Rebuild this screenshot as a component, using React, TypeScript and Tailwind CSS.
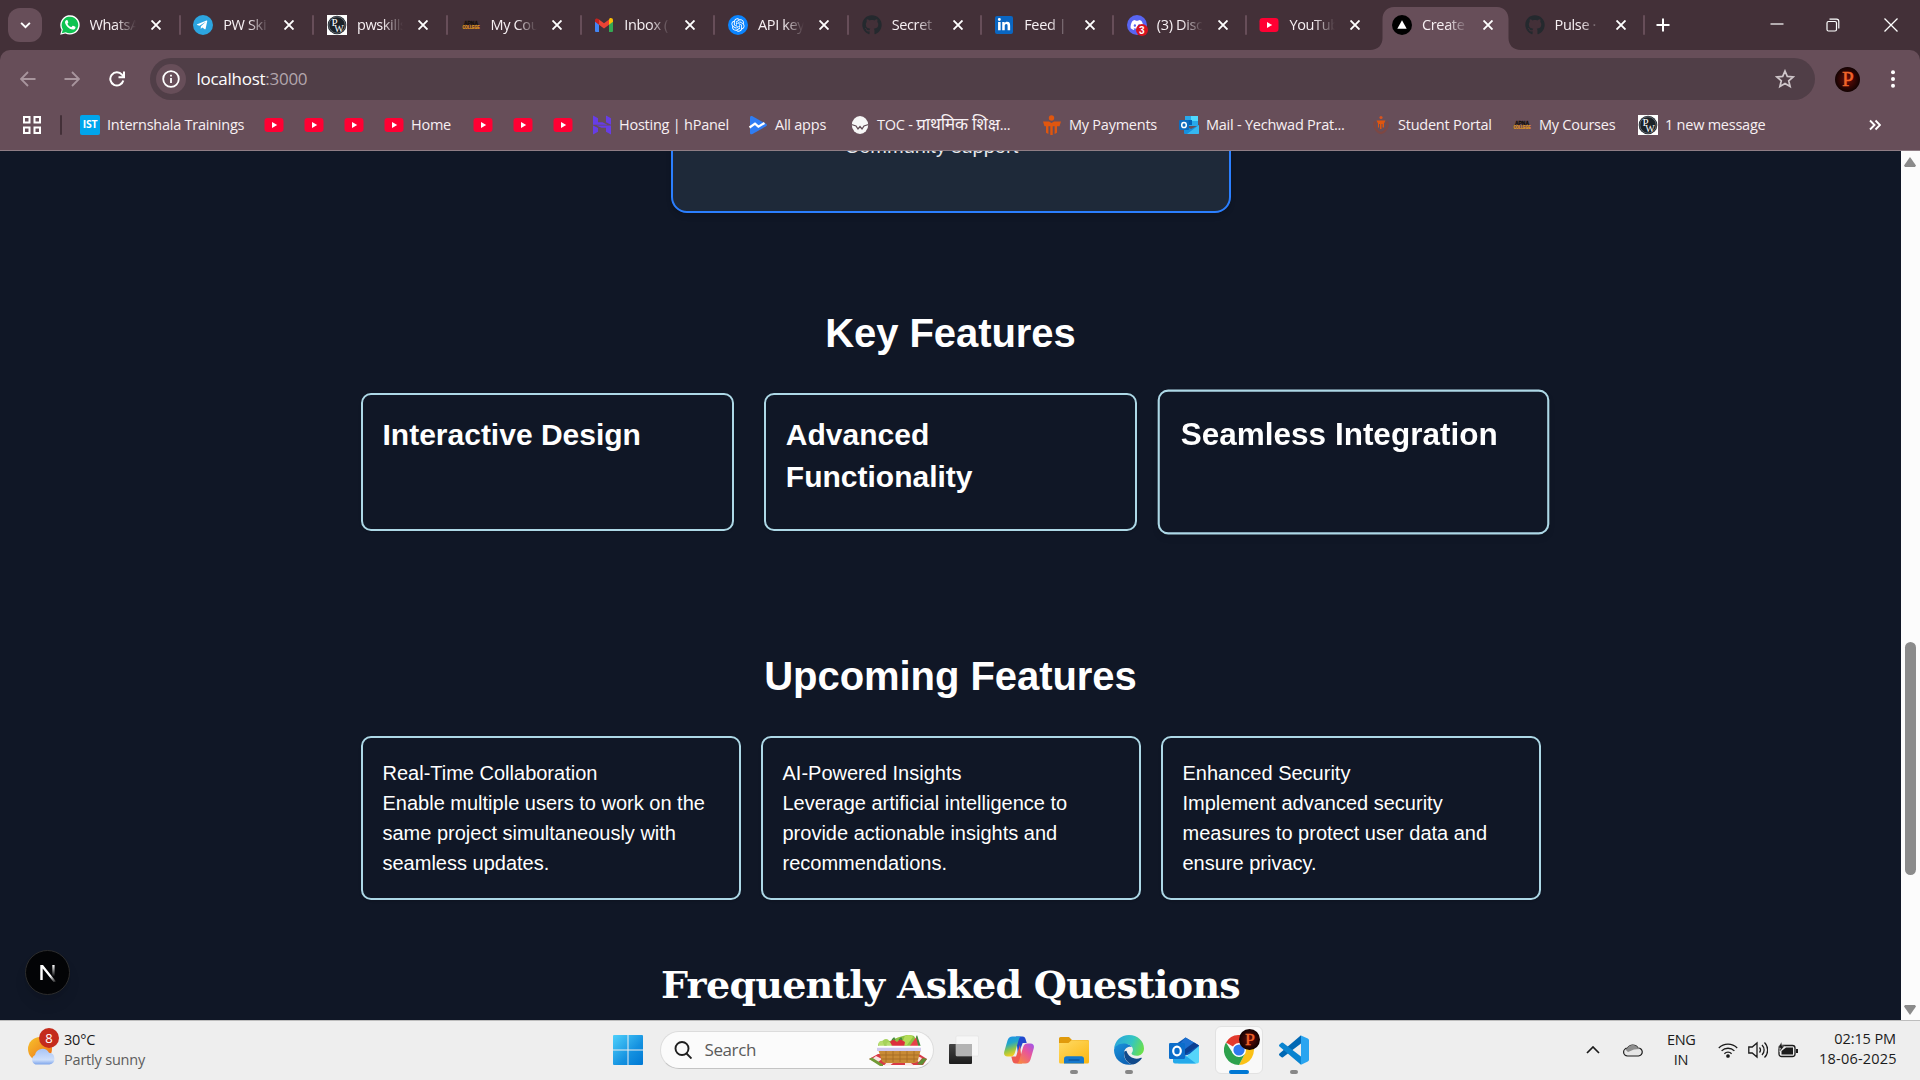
import type { ReactNode } from "react";
import { FaWhatsapp, FaTelegramPlane, FaGithub, FaLinkedinIn, FaDiscord } from "react-icons/fa";
import { RiOpenaiFill } from "react-icons/ri";

function YouTube() {
  return (
    <svg viewBox="0 0 20 20" className="size-5">
      <rect x="0.5" y="3" width="19" height="14" rx="3.2" fill="#ff0033" />
      <path d="M8 6.9v6.2l5.2-3.1z" fill="#fff" />
    </svg>
  );
}

function Github() {
  return <FaGithub className="size-5 text-[#24292e]" />;
}

function PwLogo() {
  return (
    <svg viewBox="0 0 20 20" className="size-5">
      <rect width="20" height="20" fill="#fff" />
      <circle cx="10" cy="10" r="9.3" fill="#1b2127" />
      <circle cx="10" cy="10" r="8.2" fill="none" stroke="#7d858c" strokeWidth="0.7" />
      <text x="4.6" y="11" fontFamily="Liberation Serif, serif" fontSize="11" fill="#fff">P</text>
      <text x="7.2" y="16.6" textLength="9.5" lengthAdjust="spacingAndGlyphs" fontFamily="Liberation Serif, serif" fontSize="11" fill="#fff">W</text>
    </svg>
  );
}

function CollegeLogo() {
  return (
    <svg viewBox="0 0 20 20" className="size-5">
      <text x="10" y="9.6" textAnchor="middle" fontFamily="Liberation Sans, sans-serif" fontWeight="900" fontSize="5" fill="#15100c" stroke="#15100c" strokeWidth="0.3">APNA</text>
      <text x="10" y="14" textAnchor="middle" textLength="17" lengthAdjust="spacingAndGlyphs" fontFamily="Liberation Sans, sans-serif" fontWeight="900" fontSize="5" fill="#e49a1c" stroke="#e49a1c" strokeWidth="0.2">COLLEGE</text>
    </svg>
  );
}

function WhatsApp() {
  return (
    <span className="relative flex size-5 items-center justify-center">
      <svg viewBox="0 0 20 20" className="size-5">
        <path d="M0.2 19.8 1.6 14.8A9.7 9.7 0 1 1 5.3 18.4z" fill="#fff" />
        <path d="M1.7 18.3 2.9 14.4A8.3 8.3 0 1 1 5.8 17.2z" fill="#0fc351" />
        <path d="M7.600 5.400c-.2-.5-.5-.5-.8-.5-.9 0-1.800 1-1.800 2.300 0 2.300 3.600 7.300 8 7.300 1.500 0 2.500-1 2.500-2.100 0-.4-.2-.6-.6-.8l-1.800-.9c-.3-.1-.5 0-.7.3l-.8 1c-.2.2-.4.2-.7.100-1.500-.7-2.600-1.700-3.400-3.200-.1-.2 0-.4.100-.5l.6-.7c.1-.2.1-.4 0-.600z" fill="#fff" />
      </svg>
    </span>
  );
}

function Telegram() {
  return (
    <span className="flex size-5 items-center justify-center rounded-full bg-[#2ca5e0]">
      <FaTelegramPlane className="mr-0.5 size-3 text-white" />
    </span>
  );
}

function Gmail() {
  return (
    <svg viewBox="0 0 20 20" className="size-5">
      <path d="M1 5.500V16a1 1 0 0 0 1 1h3V8.500z" fill="#4285f4" />
      <path d="M15 8.500V17h3a1 1 0 0 0 1-1V5.500z" fill="#34a853" />
      <path d="M15 4.500v5.300l4-3V5.200c0-1.900-2-2.900-3.500-1.800z" fill="#fbbc04" />
      <path d="M5 9.800V4.500l5 3.700 5-3.700v5.300l-5 3.700z" fill="#ea4335" />
      <path d="M1 5.200v1.600l4 3V4.500l-.5-.4C3 2.900 1 3.500 1 5.200z" fill="#c5221f" />
    </svg>
  );
}

function OpenAi() {
  return (
    <span className="flex size-5 items-center justify-center rounded-full bg-[#0a84ff]">
      <RiOpenaiFill className="size-4 text-white" />
    </span>
  );
}

function LinkedIn() {
  return (
    <span className="flex size-[18px] items-center justify-center rounded-xs bg-[#0a66c2]">
      <FaLinkedinIn className="size-3.5 text-white" />
    </span>
  );
}

function Discord() {
  return (
    <span className="relative flex size-5 items-center justify-center rounded-full bg-[#5865f2]">
      <FaDiscord className="size-3.5 text-white" />
      <span className="absolute -right-px -bottom-px flex size-3 items-center justify-center rounded-full bg-[#d8131f] font-[Liberation_Sans,sans-serif] text-[10px] font-bold text-white">3</span>
    </span>
  );
}

function Vercel() {
  return (
    <svg viewBox="0 0 20 20" className="size-5">
      <circle cx="10" cy="10" r="10" fill="#000" />
      <path d="M10 5.300 14.700 13.800H5.300z" fill="#fff" />
    </svg>
  );
}

function Hostinger() {
  return (
    <svg viewBox="0 0 20 20" className="size-5" fill="#673de6">
      <path d="M1 .500l5 2.800v3.900h4.500l5 2.600H1z" />
      <path d="M14 .500l5 2.800V9.800l-5-2.600z" />
      <path d="M19 19.500l-5-2.800v-3.900H9.500l-5-2.400H19z" />
      <path d="M1 10.600l5 2.400v3.700L1 19.500z" />
    </svg>
  );
}

function AllApps() {
  return (
    <svg viewBox="0 0 20 20" className="size-5">
      <path d="M2 2.500C2 1 3.200.500 4.500 1.200L18 8.800c1.200.700 1.200 1.800 0 2.500L4.500 19C3.200 19.700 2 19.200 2 17.700z" fill="#2f7df4" />
      <path d="M1.500 12.500 7 8.600l3.400 3L16.500 8" fill="none" stroke="#fff" strokeWidth="2.200" />
    </svg>
  );
}

function Toc() {
  return (
    <svg viewBox="0 0 20 20" className="size-5">
      <ellipse cx="10" cy="10" rx="8.200" ry="9" fill="#f6f6f6" />
      <path d="M1.500 9.500 6 11l2 3 2-2.500 2 2.500 2-3 4.500-1.500" fill="none" stroke="#5e4a53" strokeWidth="1.300" />
    </svg>
  );
}

function Payments() {
  return (
    <svg viewBox="0 0 20 20" className="size-5" fill="#e0560e">
      <circle cx="9.500" cy="3" r="2.700" />
      <path d="M1 6.500h6l2.500 1.500L12 6.500h7l-1.500 4.800H2.500z" />
      <path d="M4 11h2.400v8l-2.400-1.200zM8.300 11h2.400v9H8.300zM12.600 11H15v6.800L12.600 19z" />
    </svg>
  );
}

function OutlookOld() {
  return (
    <svg viewBox="0 0 20 20" className="size-5">
      <rect x="6" y="1" width="13" height="10" fill="#28a8ea" />
      <rect x="12" y="1" width="7" height="5" fill="#50d9ff" />
      <rect x="6" y="5" width="7" height="5" fill="#0364b8" />
      <path d="M5 10l7 4 8-4v8a1 1 0 0 1-1 1H6a1 1 0 0 1-1-1z" fill="#1490df" />
      <path d="M20 10v8a1 1 0 0 1-1 1H8z" fill="#35b8f1" />
      <rect x="0" y="5" width="10" height="10" rx="1" fill="#0f6cbd" />
      <ellipse cx="5" cy="10" rx="2.300" ry="2.600" fill="none" stroke="#fff" strokeWidth="1.500" />
    </svg>
  );
}

function Student() {
  return (
    <svg viewBox="0 0 20 20" className="size-5">
      <path d="M4 6.500c-2 5 1.500 10.500 6 11.500 4.500-1 8-6.500 6-11.500" fill="none" stroke="#7d4743" strokeWidth="2.200" />
      <circle cx="10" cy="2.500" r="1.600" fill="#d9541e" />
      <path d="M5.500 5.500h9l-1.500 3v4h-1.500V9h-1v5H9V9H8v3.500H7v-4z" fill="#e0560e" />
    </svg>
  );
}

function Ist() {
  return (
    <span className="flex size-5 items-center justify-center rounded-xs bg-[#00a5ec] font-[Open_Sans,sans-serif] text-[10.5px] font-bold tracking-[-0.2px] text-white">IST</span>
  );
}

function CloseX() {
  return (
    <svg viewBox="0 0 10 10" className="size-2.5">
      <path d="M0.500.500l9 9M9.500.500l-9 9" stroke="#fff" strokeWidth="1.900" />
    </svg>
  );
}

const tabs: { icon: ReactNode; title: string; active?: boolean; noSep?: boolean }[] = [
  { icon: <WhatsApp />, title: "WhatsA" },
  { icon: <Telegram />, title: "PW Ski" },
  { icon: <PwLogo />, title: "pwskills" },
  { icon: <CollegeLogo />, title: "My Cou" },
  { icon: <Gmail />, title: "Inbox (" },
  { icon: <OpenAi />, title: "API key" },
  { icon: <Github />, title: "Secret" },
  { icon: <LinkedIn />, title: "Feed |" },
  { icon: <Discord />, title: "(3) Disc" },
  { icon: <YouTube />, title: "YouTub", noSep: true },
  { icon: <Vercel />, title: "Create", active: true, noSep: true },
  { icon: <Github />, title: "Pulse ·" },
];

function TabStrip() {
  return (
    <div className="flex h-[50px] items-stretch bg-[#433038]">
      <div className="flex w-[47px] items-center pl-2">
        <div className="flex h-[34px] w-[34px] items-center justify-center rounded-xl bg-[#674e59]">
          <svg viewBox="0 0 12 8" className="h-[7px] w-[11px]">
            <path d="M1 1l5 5 5-5" fill="none" stroke="#fff" strokeWidth="2.200" />
          </svg>
        </div>
      </div>
      {tabs.map((t, i) => (
        <div key={i} className={i < 6 ? "relative flex w-[133.7px] items-center" : "relative flex w-[132.6px] items-center"}>
          {t.active && (
            <svg viewBox="0 0 152 43" className="absolute top-[7px] -left-[10px] h-[43px] w-[152px]">
              <path d="M0 43C8 43 12.500 38 12.500 31V12C12.500 5 17 0 24 0H127C134 0 138.500 5 138.500 12V31C138.500 38 143 43 151 43Z" fill="#674e59" />
            </svg>
          )}
          <div className="relative ml-[12.500px] flex w-5 justify-center">{t.icon}</div>
          <div className="relative ml-[10px] w-[46px] overflow-hidden mask-r-from-55% mask-r-to-100% text-[14.5px] leading-5 tracking-[-0.35px] whitespace-nowrap text-[#f7f0f3]">{t.title}</div>
          <div className="relative ml-[15px]"><CloseX /></div>
          {!t.noSep && <div className="ml-auto h-5 w-[2px] rounded-full bg-[#674e59]" />}
        </div>
      ))}
      <div className="flex w-[31px] items-center justify-end pr-[6px]">
        <svg viewBox="0 0 14 14" className="size-3.5">
          <path d="M7 .500v13M.500 7h13" stroke="#fff" strokeWidth="2" />
        </svg>
      </div>
      <div className="ml-auto flex items-center pr-[22px]">
        <svg viewBox="0 0 14 14" className="mr-[42px] size-3.5"><path d="M.500 6h13" stroke="#fff" strokeWidth="1.200" /></svg>
        <svg viewBox="0 0 14 14" className="mr-[44px] size-3.5">
          <rect x="1" y="3.500" width="9.500" height="9.500" rx="1.500" fill="none" stroke="#fff" strokeWidth="1.200" />
          <path d="M3.500 1.200h7a2.300 2.300 0 0 1 2.300 2.300v7" fill="none" stroke="#fff" strokeWidth="1.200" />
        </svg>
        <svg viewBox="0 0 14 14" className="size-3.5"><path d="M.500.500l13 13M13.500.500l-13 13" stroke="#fff" strokeWidth="1.300" /></svg>
      </div>
    </div>
  );
}

function ProfileBadge({ className }: { className: string }) {
  return (
    <svg viewBox="0 0 26 26" className={className}>
      <defs>
        <radialGradient id="pbg">
          <stop offset="0" stopColor="#6b0d08" />
          <stop offset="0.700" stopColor="#2c0504" />
          <stop offset="1" stopColor="#120202" />
        </radialGradient>
      </defs>
      <circle cx="13" cy="13" r="13" fill="url(#pbg)" />
      <text x="13.500" y="20" textAnchor="middle" fontFamily="Liberation Serif, serif" fontSize="22" fill="#f0642a" stroke="#f0642a" strokeWidth="0.500">P</text>
    </svg>
  );
}

function Toolbar() {
  return (
    <div className="bg-[#433038]">
      <div className="flex h-[58px] items-center rounded-t-[10px] bg-[#674e59]">
        <svg viewBox="0 0 16 16" className="ml-[20px] size-4" fill="none" stroke="#a8959d" strokeWidth="1.800"><path d="M15.500 8H1.500M8 1L1 8l7 7" /></svg>
        <svg viewBox="0 0 16 16" className="ml-[28px] size-4" fill="none" stroke="#a8959d" strokeWidth="1.800"><path d="M.500 8h14M8 1l7 7-7 7" /></svg>
        <svg viewBox="0 0 16 16" className="ml-[29px] size-4" fill="none" stroke="#fff" strokeWidth="2">
          <path d="M14.300 9.500A6.600 6.600 0 1 1 13 3.700L14.600 5.500" />
          <path d="M15 .500V6.200H9.500" />
        </svg>
        <div className="ml-[25px] flex h-[42px] w-[1665px] items-center rounded-full bg-[#503e47] pl-[6px]">
          <div className="flex size-[30px] items-center justify-center rounded-full bg-[#674e59]">
            <svg viewBox="0 0 18 18" className="size-[18px]">
              <circle cx="9" cy="9" r="7.800" fill="none" stroke="#fff" strokeWidth="1.800" />
              <path d="M9 8v5M9 4.800v1.800" stroke="#fff" strokeWidth="1.800" />
            </svg>
          </div>
          <div className="ml-[10.500px] text-[17px] tracking-[-0.27px] text-white">
            localhost<span className="text-[#b3a6ad]">:3000</span>
          </div>
          <svg viewBox="0 0 20 20" className="mr-[20px] ml-auto size-5" fill="none" stroke="#cfc6ca" strokeWidth="1.700">
            <path d="M10 2l2.300 5.400 5.900.500-4.500 3.900 1.400 5.700L10 14.400 4.900 17.500l1.400-5.700L1.800 7.900l5.900-.500z" />
          </svg>
        </div>
        <ProfileBadge className="ml-[20px] size-[25px]" />
        <svg viewBox="0 0 4 18" className="ml-[31px] h-[18px] w-1" fill="#fff">
          <circle cx="2" cy="2.200" r="2" /><circle cx="2" cy="9" r="2" /><circle cx="2" cy="15.800" r="2" />
        </svg>
      </div>
    </div>
  );
}

function Mark({ icon, label, w }: { icon: ReactNode; label?: ReactNode; w: string }) {
  return (
    <div className={`flex shrink-0 items-center gap-[7px] whitespace-nowrap ${w}`}>
      {icon}
      {label && <span className="tracking-[-0.24px]">{label}</span>}
    </div>
  );
}

function Bookmarks() {
  return (
    <div className="flex h-[43px] items-center border-b border-[#8f7d85] bg-[#674e59] pb-2 text-[14.5px] text-[#f7f0f3]">
      <svg viewBox="0 0 18 18" className="ml-[23px] size-[18px]" fill="none" stroke="#fff" strokeWidth="2">
        <rect x="1" y="1" width="5.500" height="5.500" /><rect x="11.500" y="1" width="5.500" height="5.500" />
        <rect x="1" y="11.500" width="5.500" height="5.500" /><rect x="11.500" y="11.500" width="5.500" height="5.500" />
      </svg>
      <div className="mr-[18px] ml-[19px] h-5 w-[2px] rounded-full bg-[#433038]" />
      <Mark icon={<Ist />} label="Internshala Trainings" w="w-[184px]" />
      <Mark icon={<YouTube />} w="w-[40px]" />
      <Mark icon={<YouTube />} w="w-[40px]" />
      <Mark icon={<YouTube />} w="w-[40px]" />
      <Mark icon={<YouTube />} label="Home" w="w-[88.500px]" />
      <Mark icon={<YouTube />} w="w-[40px]" />
      <Mark icon={<YouTube />} w="w-[40px]" />
      <Mark icon={<YouTube />} w="w-[39.500px]" />
      <Mark icon={<Hostinger />} label="Hosting | hPanel" w="w-[156px]" />
      <Mark icon={<AllApps />} label="All apps" w="w-[102px]" />
      <Mark
        icon={<Toc />}
        label={<>TOC - <span className="text-[17px] leading-5">प्राथमिक शिक्ष</span>...</>}
        w="w-[192px]"
      />
      <Mark icon={<Payments />} label="My Payments" w="w-[137px]" />
      <Mark icon={<OutlookOld />} label="Mail - Yechwad Prat..." w="w-[192px]" />
      <Mark icon={<Student />} label="Student Portal" w="w-[141px]" />
      <Mark icon={<CollegeLogo />} label="My Courses" w="w-[126px]" />
      <Mark icon={<PwLogo />} label="1 new message" w="w-[140px]" />
      <svg viewBox="0 0 12 12" className="mr-[39px] ml-auto size-3" fill="none" stroke="#fff" strokeWidth="1.900">
        <path d="M1 1.500L5.500 6 1 10.500M6.500 1.500L11 6l-4.500 4.500" />
      </svg>
    </div>
  );
}

const keyFeatures = ["Interactive Design", "Advanced Functionality", "Seamless Integration"];
const upcoming = [
  ["Real-Time Collaboration", "Enable multiple users to work on the same project simultaneously with seamless updates."],
  ["AI-Powered Insights", "Leverage artificial intelligence to provide actionable insights and recommendations."],
  ["Enhanced Security", "Implement advanced security measures to protect user data and ensure privacy."],
];

function Page() {
  return (
    <div className="relative flex h-[869px] overflow-hidden bg-[#101726] font-[Liberation_Sans,Arial,sans-serif] text-white">
      <div className="flex w-[1901px] shrink-0 flex-col items-center">
        <div className="-mt-5 h-[82px] w-[560px] shrink-0 rounded-b-2xl border-2 border-[#2b7fff] bg-[#1e2939] pr-[38px] text-center text-xl leading-[30px] text-[#e5e7eb] shadow-md">
          <div className="-mt-[2px]">Community support</div>
        </div>
        <h2 className="mt-[90px] text-[40px] leading-[60px] font-bold tracking-[-0.06px]">Key Features</h2>
        <div className="mt-[30px] grid w-[1180px] grid-cols-3 gap-[30px]">
          {keyFeatures.map((k, i) => (
            <div key={k} className={i === 2 ? "h-[138px] scale-105 rounded-[10px] border-2 border-[#add8e6] p-5 shadow-md" : "h-[138px] rounded-[10px] border-2 border-[#add8e6] p-5 shadow-sm"}>
              <h3 className={i === 2 ? "text-[30px] leading-[42px] font-bold" : "-mt-px text-[30px] leading-[42px] font-bold"}>{k}</h3>
            </div>
          ))}
        </div>
        <h2 className="mt-[115px] text-[40px] leading-[60px] font-bold tracking-[-0.06px]">Upcoming Features</h2>
        <div className="mt-[30px] grid w-[1180px] grid-cols-3 gap-5">
          {upcoming.map(([t, d]) => (
            <div key={t} className="h-[164px] rounded-[10px] border-2 border-[#add8e6] p-5 text-xl leading-[30px] shadow-sm">
              <h3>{t}</h3>
              <p>{d}</p>
            </div>
          ))}
        </div>
        <h2 className="mt-[55px] font-[DejaVu_Serif,Georgia,serif] text-[38px] leading-[60px] font-bold tracking-[-0.72px] whitespace-nowrap">Frequently Asked Questions</h2>
      </div>
      <div className="flex w-[19px] flex-col items-center bg-[#fcfcfc] pr-px">
        <svg viewBox="0 0 12 10" className="mt-[6px] h-[10px] w-3"><path d="M6 0L12 8.500 11 10H1L0 8.500z" fill="#8b8b8b" /></svg>
        <div className="mt-[475px] h-[233px] w-[11px] rounded-full bg-[#8b8b8b]" />
        <svg viewBox="0 0 12 10" className="mt-auto mb-[5px] h-[10px] w-3"><path d="M6 10L12 1.500 11 0H1L0 1.500z" fill="#8b8b8b" /></svg>
      </div>
      <div className="absolute top-[799px] left-[25px] flex size-[45px] items-center justify-center rounded-full border-[1.5px] border-[#2c2c2c] bg-[#030406] shadow-lg">
        <svg viewBox="0 0 18 18" className="size-[18px]">
          <defs>
            <linearGradient id="nd" gradientUnits="userSpaceOnUse" x1="9" y1="9" x2="16.500" y2="18"><stop offset="0.300" stopColor="#fff" /><stop offset="1" stopColor="#fff" stopOpacity="0.100" /></linearGradient>
            <linearGradient id="nv" x1="0" y1="0" x2="0" y2="1"><stop offset="0" stopColor="#fff" /><stop offset="1" stopColor="#fff" stopOpacity="0" /></linearGradient>
          </defs>
          <path d="M1.300 1H4L17 17.500 14.800 18.300 3.700 4.500V16H1.300z" fill="url(#nd)" />
          <rect x="13.300" y="1" width="2.300" height="11.500" fill="url(#nv)" />
        </svg>
      </div>
    </div>
  );
}

function WindowsLogo() {
  return (
    <svg viewBox="0 0 30 30" className="size-[30px]">
      <defs><linearGradient id="win" x1="0" y1="0" x2="1" y2="1"><stop offset="0" stopColor="#4fd0fb" /><stop offset="0.600" stopColor="#1491e0" /><stop offset="1" stopColor="#0078d4" /></linearGradient></defs>
      <path d="M1 0h13.500v14.500H0V1a1 1 0 0 1 1-1zM15.500 0H29a1 1 0 0 1 1 1v13.500H15.500zM0 15.500h14.500V30H1a1 1 0 0 1-1-1zM15.500 15.500H30V29a1 1 0 0 1-1 1H15.500z" fill="url(#win)" />
    </svg>
  );
}

function Basket() {
  return (
    <svg viewBox="0 0 58 32" className="h-8 w-[58px]">
      <path d="M0 25l9-5h41l8 5-4 6H13z" fill="#d93a46" />
      <path d="M7 22l6 3-4 3-6-3zM18 28l6 1-3 2.500h-6zM36 28l6 1 3 2.500h-9zM48 22l5 2-3 4-4-2z" fill="#f8e5e3" />
      <path d="M0 25l3-1.500 11 7V32h-3z" fill="#719a35" /><path d="M58 25l-4-1-6 6 5 1z" fill="#5f8f35" />
      <path d="M9 12c0-5 6-7 12-5 5-3 12-5 17-6 3 0 5 0 7 1l3 5 3 6z" fill="#8fc142" />
      <circle cx="12.500" cy="10" r="3" fill="#b7dd70" /><circle cx="17" cy="8" r="3" fill="#a6d25c" /><circle cx="20" cy="10.500" r="2.500" fill="#b7dd70" />
      <path d="M36 2c3-2 7-1 8 1l-6 8h-5c1-3 1-6 3-9z" fill="#b4dc57" />
      <path d="M21 8l3-3 4 3 3-3 5 3-1 5H24z" fill="#dc2f3c" />
      <path d="M23 6l2-2 1 2M30 6l2-2 1 2" stroke="#3f8c3a" strokeWidth="1.200" fill="none" />
      <path d="M48 2l2.500 11H40z" fill="#e8404a" /><path d="M48 1l4 12h-2.500L47 3z" fill="#3f8c3a" />
      <path d="M9 15h43l-3 11c-.5 2-1.500 3-4 3H17c-2.500 0-4-1-4.500-3z" fill="#c88a35" />
      <path d="M11 21h39M12 25h37M17 17v11M24 17v11M31 17v11M38 17v11M45 17v11" stroke="#a56c25" strokeWidth="0.900" />
      <path d="M8 12.500h44v4.500H8z" fill="#cfc8f0" /><path d="M8 11.800h44v2H8z" fill="#fff" />
    </svg>
  );
}

function TaskView() {
  return (
    <svg viewBox="0 0 30 30" className="size-[30px]">
      <defs><linearGradient id="tv" x1="0" y1="0" x2="0" y2="1"><stop offset="0" stopColor="#444" /><stop offset="1" stopColor="#1c1c1c" /></linearGradient></defs>
      <rect x="0" y="9" width="23" height="20" rx="1" fill="url(#tv)" />
      <rect x="7" y="1" width="22.500" height="20" rx="1" fill="#f7f7f7" stroke="#dcdcdc" strokeWidth="0.500" />
      <rect x="7" y="9" width="16" height="12" fill="#b3b3b3" />
    </svg>
  );
}

function Copilot() {
  return (
    <svg viewBox="0 0 30 30" className="size-[30px]">
      <defs>
        <linearGradient id="c1" x1="0" y1="0" x2="0.300" y2="1"><stop offset="0" stopColor="#1c8cf0" /><stop offset="0.400" stopColor="#22a7c8" /><stop offset="0.700" stopColor="#8fc54a" /><stop offset="1" stopColor="#f5cf20" /></linearGradient>
        <linearGradient id="c2" x1="1" y1="0" x2="0.200" y2="1"><stop offset="0" stopColor="#9c55f0" /><stop offset="0.450" stopColor="#e8559a" /><stop offset="1" stopColor="#f98a3c" /></linearGradient>
      </defs>
      <path d="M12 1.500h6.500c1.800 0 2.700 1.200 3.200 3l1 3.500h-4L14 20z" fill="#2049cf" />
      <path d="M18 28.500h-6.500c-1.800 0-2.700-1.200-3.200-3L7.300 21.500H12L16 10z" fill="#ee5a50" />
      <path d="M8.500 1.500H18c-2 0-2.800 1.500-3.500 4l-3.500 12c-.8 2.700-2 4-4.500 4H3.500c-3 0-4-2.200-3.200-5L3.500 5.500c.8-2.700 2.500-4 5-4z" fill="url(#c1)" />
      <path d="M21.500 28.500H12c2 0 2.800-1.500 3.500-4l3.500-12c.8-2.700 2-4 4.500-4h3c3 0 4 2.200 3.200 5l-3.200 11c-.8 2.700-2.500 4-5 4z" fill="url(#c2)" />
    </svg>
  );
}

function Folder() {
  return (
    <svg viewBox="0 0 30 30" className="size-[30px]">
      <defs><linearGradient id="fo" x1="0" y1="0" x2="0.800" y2="1"><stop offset="0" stopColor="#ffdb66" /><stop offset="1" stopColor="#fbb917" /></linearGradient></defs>
      <path d="M0 3.500A1.500 1.500 0 0 1 1.500 2H10l3 3h15.500A1.500 1.500 0 0 1 30 6.500V12H0z" fill="#e09a0c" />
      <path d="M0 8h9.500l3-2.800h16A1.500 1.500 0 0 1 30 6.700V27a1.500 1.500 0 0 1-1.500 1.500h-27A1.500 1.500 0 0 1 0 27z" fill="url(#fo)" />
      <path d="M5 28.500V24a2.800 2.800 0 0 1 2.800-2.800h14.400A2.800 2.800 0 0 1 25 24v4.500z" fill="#1478cc" />
      <path d="M9.500 25h11" stroke="#0a4f96" strokeWidth="1.200" />
    </svg>
  );
}

function Edge() {
  return (
    <svg viewBox="0 0 30 30" className="size-[30px]">
      <defs>
        <linearGradient id="e1" x1="0" y1="0.300" x2="1" y2="0.600"><stop offset="0" stopColor="#2aa5dc" /><stop offset="0.550" stopColor="#33c5c3" /><stop offset="1" stopColor="#6be04b" /></linearGradient>
        <linearGradient id="e2" x1="0" y1="0" x2="0.600" y2="1"><stop offset="0" stopColor="#1a94dc" /><stop offset="1" stopColor="#0d62b4" /></linearGradient>
      </defs>
      <path d="M0 14C.800 5.500 7 0 15 0c8.500 0 15 6 15 13.500 0 4.500-3.200 7.300-7.300 7.300-3.300 0-5.200-1.200-5.200-2.300 0-.9 1.400-1.300 1.400-3.800 0-3-3-5.700-7.400-5.700C5.500 9 1.500 11.500 0 14z" fill="url(#e1)" />
      <path d="M0 15C.300 11 5.500 8 11 8.500c3.200.3 5.800 1.700 7 3.500-4-1-8 1.500-8 6.500 0 5.500 3.700 10 8.500 11C8.500 31.500 0 24.500 0 15z" fill="url(#e2)" />
      <path d="M10.200 16.500c-.8 5.500 3 12.500 8.800 13 3.500-.8 6.800-3 8.700-6 .4-.7-.2-1-.8-.7-6.200 2.500-12.500-.6-14.500-7z" fill="#114a8b" />
    </svg>
  );
}

function OutlookNew() {
  return (
    <svg viewBox="0 0 30 30" className="size-[30px]">
      <path d="M5 10.500L16.500 2.500 30 10.500v6L5 24z" fill="#0a57b5" />
      <path d="M16.500 2.500L30 10.500 12 21 8 12z" fill="#1b6fd0" /><path d="M25 7.500l5 3L12 22v-5z" fill="#0a3f92" />
      <path d="M30 11v15.500a2 2 0 0 1-2 2H9z" fill="#55d5fa" />
      <path d="M4 15l13 6 10 7.500H6a2 2 0 0 1-2-2z" fill="#24a9ea" />
      <rect x="0" y="8" width="16" height="16" rx="1.200" fill="#0b6dca" />
      <ellipse cx="8" cy="16" rx="3.800" ry="4.300" fill="none" stroke="#fff" strokeWidth="2.200" />
    </svg>
  );
}

function Chrome() {
  return (
    <svg viewBox="0 0 30 30" className="size-[30px]">
      <path d="M15 15L2 7.500A15 15 0 0 1 28 7.500z" fill="#e33b2e" />
      <path d="M15 8H28.200A15 15 0 0 1 15 30L21 18.500z" fill="#fbc116" />
      <path d="M2 7.500L9 18.500 15 21.500 21 18.500 15 30A15 15 0 0 1 2 7.500z" fill="#2da14c" />
      <circle cx="15" cy="15" r="7" fill="#fff" />
      <circle cx="15" cy="15" r="5.600" fill="#2f79ed" />
    </svg>
  );
}

function VsCode() {
  return (
    <svg viewBox="0 0 30 30" className="size-[30px]">
      <path d="M22 .500L28.800 3.500A2 2 0 0 1 30 5.300V24.700A2 2 0 0 1 28.800 26.500L22 29.800z" fill="#2aa5f0" />
      <path d="M22 .300V8.500L4 22.200a1.500 1.500 0 0 1-1.800-.1L.500 20.500a1.300 1.300 0 0 1 0-1.900z" fill="#0068b4" />
      <path d="M22 29.700V21.500L4 7.800a1.500 1.500 0 0 0-1.800.1L.500 9.500a1.300 1.300 0 0 0 0 1.900z" fill="#0a84d0" />
    </svg>
  );
}

function TaskIcon({ children, dot, active }: { children: ReactNode; dot?: boolean; active?: boolean }) {
  return (
    <div className="flex w-[55px] justify-center">
      <div className={active ? "relative flex h-12 w-12 items-center justify-center rounded-md border border-[#e2e2e2] bg-[#f9f9f9]" : "relative flex h-12 w-12 items-center justify-center"}>
        {children}
        {active && <ProfileBadge className="absolute top-[2px] right-[2px] size-[21px]" />}
        {dot && <div className="absolute bottom-0 h-1 w-2 rounded-full bg-[#868686]" />}
        {active && <div className="absolute -bottom-px h-1 w-5 rounded-full bg-[#0078d4]" />}
      </div>
    </div>
  );
}

function Taskbar() {
  return (
    <div className="flex h-[60px] items-center border-t border-[#bdbdbd] bg-[#eeeeee] pb-px text-[14.5px] leading-5 text-[#1b1b1b]">
      <div className="flex w-[612.500px] items-center pl-[26px]">
        <div className="relative h-[40px] w-[38px]">
          <svg viewBox="0 0 38 40" className="h-[40px] w-[38px]">
            <defs>
              <linearGradient id="sun" x1="0" y1="0" x2="1" y2="1"><stop offset="0" stopColor="#f6c32c" /><stop offset="1" stopColor="#ee6a17" /></linearGradient>
              <linearGradient id="cl" x1="0" y1="0" x2="0" y2="1"><stop offset="0" stopColor="#a9c4f5" /><stop offset="0.700" stopColor="#cfe0fb" /><stop offset="1" stopColor="#7da4ea" /></linearGradient>
            </defs>
            <circle cx="14" cy="19" r="12" fill="url(#sun)" />
            <path d="M9.500 34.500a5.200 5.200 0 0 1-.5-9.500 7.500 7.500 0 0 1 14-2.200 5.900 5.900 0 0 1 .500 11.700z" fill="url(#cl)" />
          </svg>
          <div className="absolute -top-[2px] left-[13px] flex size-5 items-center justify-center rounded-full bg-[#c42b1c] text-[13px] text-white">8</div>
        </div>
        <div className="-mt-px tracking-[-0.2px]">
          <div>30°C</div>
          <div className="text-[#5d5d5d]">Partly sunny</div>
        </div>
      </div>
      <WindowsLogo />
      <div className="ml-[17px] flex h-[38px] w-[274px] items-center rounded-full border border-[#dcdcdc] border-b-[#c4c4c4] bg-[#fbfbfb] pl-[13px]">
        <svg viewBox="0 0 18 18" className="size-[18px]" fill="none" stroke="#1f1f1f" strokeWidth="1.900"><circle cx="8" cy="7.500" r="6.500" /><path d="M12.500 12.500l5 5" /></svg>
        <span className="ml-[13px] text-[17px] tracking-[-0.4px] text-[#5a5a5a]">Search</span>
        <div className="mr-[6px] ml-auto"><Basket /></div>
      </div>
      <div className="ml-[3px] flex">
        <TaskIcon><TaskView /></TaskIcon>
        <TaskIcon><Copilot /></TaskIcon>
        <TaskIcon dot><Folder /></TaskIcon>
        <TaskIcon dot><Edge /></TaskIcon>
        <TaskIcon><OutlookNew /></TaskIcon>
        <TaskIcon active><Chrome /></TaskIcon>
        <TaskIcon dot><VsCode /></TaskIcon>
      </div>
      <div className="ml-auto flex items-center pr-6">
        <svg viewBox="0 0 14 8" className="mr-[23px] h-2 w-3.5" fill="none" stroke="#1b1b1b" strokeWidth="1.700"><path d="M1 7l6-6 6 6" /></svg>
        <svg viewBox="0 0 20 14" className="mr-[24px] h-3.5 w-5">
          <path d="M4.500 13A3.800 3.800 0 0 1 4.500 5.200 6 6 0 0 1 15 5a4 4 0 0 1 .500 8z" fill="#e6e6e6" stroke="#1b1b1b" strokeWidth="1.200" />
          <path d="M2 6.200 4.500 5.200A6 6 0 0 1 15 5l2 1-6 .500L5 9z" fill="#8d8d8d" />
        </svg>
        <div className="w-[28px] text-center tracking-[-0.3px]">
          <div>ENG</div>
          <div>IN</div>
        </div>
        <svg viewBox="0 0 20 16" className="ml-[23px] h-4 w-5" fill="none" stroke="#1b1b1b" strokeWidth="1.300">
          <path d="M.800 6a13 13 0 0 1 18.400 0M3.600 8.900a9 9 0 0 1 12.800 0M6.400 11.700a5 5 0 0 1 7.200 0" /><circle cx="10" cy="14" r="1.200" fill="#1b1b1b" />
        </svg>
        <svg viewBox="0 0 20 18" className="ml-[10px] h-[18px] w-5" fill="none" stroke="#1b1b1b" strokeWidth="1.300">
          <path d="M.800 6h3.400L9 2v14l-4.800-4H.800zM11.500 6.500a4 4 0 0 1 0 5M14 4a7 7 0 0 1 0 10M16.500 1.500a10.500 10.500 0 0 1 0 15" />
        </svg>
        <svg viewBox="0 0 20 16" className="ml-[10px] h-4 w-5">
          <rect x="1" y="3.500" width="16" height="11" rx="2.500" fill="none" stroke="#1b1b1b" strokeWidth="1.300" />
          <path d="M3.500 12.500V9L8 5.500h7v7z" fill="#1b1b1b" /><rect x="18" y="7" width="2" height="4" fill="#1b1b1b" />
          <path d="M3.500 0L0 6h2.500L1.500 10 6.500 4H4z" fill="#1b1b1b" stroke="#eee" strokeWidth="0.400" />
        </svg>
        <div className="-mt-[2px] ml-[21px] w-[77px] text-right whitespace-nowrap">
          <div className="tracking-[-0.1px]">02:15 PM</div>
          <div className="tracking-[0.22px]">18-06-2025</div>
        </div>
      </div>
    </div>
  );
}

export default function App() {
  return (
    <div className="h-[1080px] w-[1920px] overflow-hidden bg-[#101726] font-[Open_Sans,Noto_Sans,sans-serif]">
      <TabStrip />
      <Toolbar />
      <Bookmarks />
      <Page />
      <Taskbar />
    </div>
  );
}
